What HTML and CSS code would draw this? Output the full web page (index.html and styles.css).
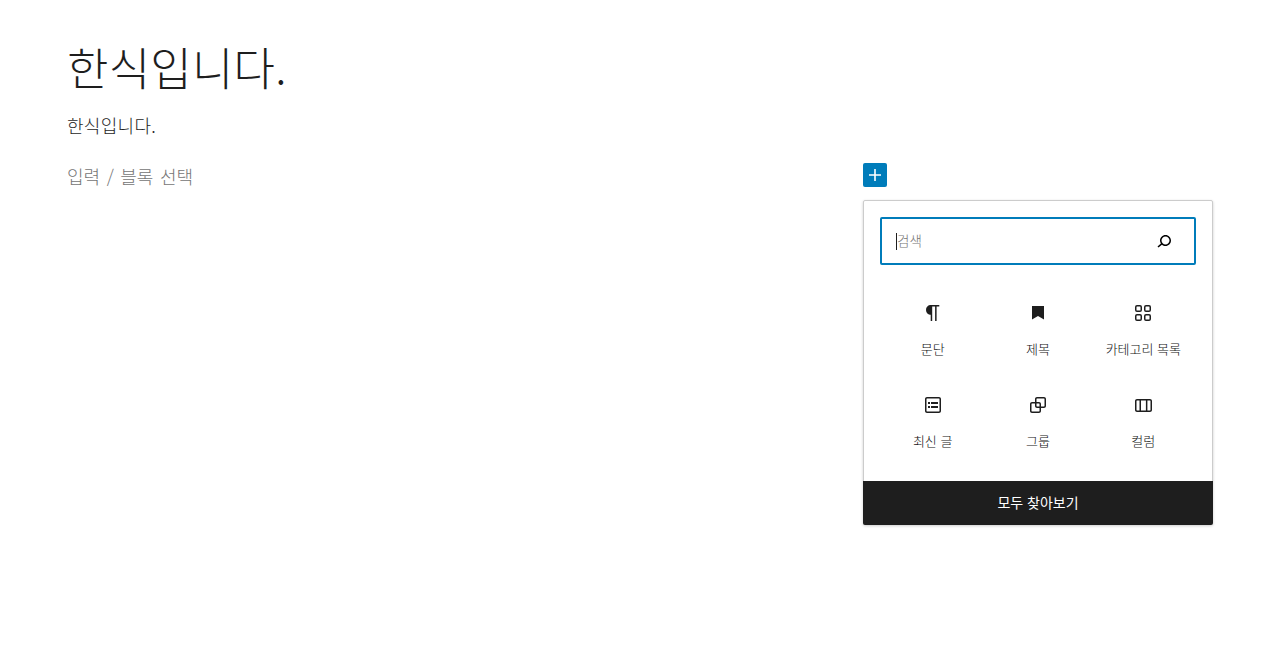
FILE: index.html
```html
<!DOCTYPE html>
<html lang="ko">
<head>
<meta charset="utf-8">
<title>한식입니다.</title>
<link rel="stylesheet" href="styles.css">
</head>
<body>
<main class="editor">
  <h1 class="title">한식입니다.</h1>
  <p class="para">한식입니다.</p>
  <p class="placeholder">입력 / 블록 선택</p>
</main>
<button class="add" aria-label="추가"><svg viewBox="0 0 24 24" width="24" height="24"><path d="M18 11.2h-5.2V6h-1.6v5.2H6v1.6h5.2V18h1.6v-5.2H18z"/></svg></button>
<section class="popover">
  <div class="search">
    <span class="caret"></span><span class="search-text">검색</span>
    <svg class="search-icon" viewBox="0 0 24 24" width="24" height="24"><path d="M13.5 6C10.5 6 8 8.5 8 11.5c0 1.1.3 2.1.9 3l-3.4 3 1 1.1 3.4-2.9c1 .9 2.2 1.4 3.6 1.4 3 0 5.5-2.5 5.5-5.5C19 8.5 16.5 6 13.5 6zm0 9.5c-2.2 0-4-1.8-4-4s1.8-4 4-4 4 1.8 4 4-1.8 4-4 4z"/></svg>
  </div>
  <div class="grid">
    <div class="item"><svg viewBox="0 0 24 24" width="24" height="24"><path d="M18.3 4H9.9v-.1l-.9.2c-2.3.4-4 2.4-4 4.8s1.700 4.400 4 4.800l.7.100V20h1.500V5.500h2.900V20h1.500V5.500h2.700V4z"/></svg><span>문단</span></div>
    <div class="item"><svg viewBox="0 0 24 24" width="24" height="24"><path d="M6 5h12v13.500l-6-3.500-6 3.500z"/></svg><span>제목</span></div>
    <div class="item"><svg viewBox="0 0 24 24" width="24" height="24"><path fill-rule="evenodd" d="M6 5.500h3a.5.5 0 01.5.5v3a.5.5 0 01-.5.5H6a.5.5 0 01-.5-.5V6a.5.5 0 01.5-.5zM4 6a2 2 0 012-2h3a2 2 0 012 2v3a2 2 0 01-2 2H6a2 2 0 01-2-2V6zm11-.5h3a.5.5 0 01.5.5v3a.5.5 0 01-.5.5h-3a.5.5 0 01-.5-.5V6a.5.5 0 01.5-.5zM13 6a2 2 0 012-2h3a2 2 0 012 2v3a2 2 0 01-2 2h-3a2 2 0 01-2-2V6zm5 8.500h-3a.5.5 0 00-.5.5v3a.5.5 0 00.5.5h3a.5.5 0 00.5-.5v-3a.5.5 0 00-.5-.5zM15 13a2 2 0 00-2 2v3a2 2 0 002 2h3a2 2 0 002-2v-3a2 2 0 00-2-2h-3zm-9 1.500h3a.5.5 0 01.5.5v3a.5.5 0 01-.5.5H6a.5.5 0 01-.5-.5v-3a.5.5 0 01.5-.5zM4 15a2 2 0 012-2h3a2 2 0 012 2v3a2 2 0 01-2 2H6a2 2 0 01-2-2v-3z"/></svg><span>카테고리 목록</span></div>
    <div class="item"><svg viewBox="0 0 24 24" width="24" height="24"><path d="M18 4H6c-1.100 0-2 .9-2 2v12c0 1.100.9 2 2 2h12c1.100 0 2-.9 2-2V6c0-1.100-.9-2-2-2zm.5 14c0 .3-.2.5-.5.5H6c-.3 0-.5-.2-.5-.5V6c0-.3.2-.5.5-.5h12c.3 0 .5.2.5.5v12zM7 11h2V9H7v2zm0 4h2v-2H7v2zm3-4h7V9h-7v2zm0 4h7v-2h-7v2z"/></svg><span>최신 글</span></div>
    <div class="item"><svg viewBox="0 0 24 24" width="24" height="24"><path d="M18 4h-7c-1.100 0-2 .9-2 2v3H6c-1.100 0-2 .9-2 2v7c0 1.100.9 2 2 2h7c1.100 0 2-.9 2-2v-3h3c1.100 0 2-.9 2-2V6c0-1.100-.9-2-2-2zm-4.500 14c0 .3-.2.5-.5.5H6c-.3 0-.5-.2-.5-.5v-7c0-.3.2-.5.5-.5h3V13c0 1.100.9 2 2 2h2.500v3zm0-4.500H11c-.3 0-.5-.2-.5-.5v-2.500H13c.3 0 .5.2.5.5v2.500zm5-.5c0 .3-.2.5-.5.5h-3V11c0-1.100-.9-2-2-2h-2.500V6c0-.3.2-.5.5-.5h7c.3 0 .5.2.5.5v7z"/></svg><span>그룹</span></div>
    <div class="item"><svg viewBox="0 0 24 24" width="24" height="24"><path d="M19 6H6c-1.100 0-2 .9-2 2v9c0 1.100.9 2 2 2h13c1.100 0 2-.9 2-2V8c0-1.100-.9-2-2-2zm-4.100 1.500v10H10v-10h4.900zM5.500 17V8c0-.3.2-.5.5-.5h2.500v10H6c-.3 0-.5-.2-.5-.5zm14 0c0 .3-.2.5-.5.500h-2.600v-10H19c.3 0 .5.2.5.5v9z"/></svg><span>컬럼</span></div>
  </div>
  <button class="browse">모두 찾아보기</button>
</section>
</body>
</html>
```
FILE: styles.css
```css
* { box-sizing: border-box; }
html, body { margin: 0; height: 100%; background: #fff; overflow: hidden; }
body { font-family: "Noto Sans CJK KR", "Noto Sans", sans-serif; color: #1e1e1e; position: relative; }
.editor { padding: 37px 0 0 67px; }
.title { margin: 0; font-size: 45px; font-weight: 300; line-height: 60px; color: #1e1e1e; letter-spacing: .25px; }
.para { margin: 16px 0 0; font-size: 18px; font-weight: 300; line-height: 24px; letter-spacing: .3px; }
.placeholder { margin: 27px 0 0; font-size: 18px; font-weight: 300; line-height: 24px; color: #757575; word-spacing: 1.5px; }
.add { position: absolute; left: 863px; top: 163px; width: 24px; height: 24px; padding: 0; border: 0; border-radius: 2px; background: #007cba; display: block; }
.add svg { fill: #fff; display: block; }
.popover { position: absolute; left: 863px; top: 200px; width: 350px; height: 325px; background: #fff; border: 1px solid #ccc; border-radius: 2px; box-shadow: 0 1px 3px rgba(0,0,0,.2); display: flex; flex-direction: column; }
.search { margin: 16px 16px 0; height: 48px; border: 2px solid #007cba; border-radius: 2px; display: flex; align-items: center; padding: 0 18px 0 14px; }
.caret { width: 1px; height: 17px; background: #1e1e1e; }
.search-text { font-size: 13.500px; font-weight: 300; color: #757575; flex: 1; position: relative; top: -1px; }
.search-icon { display: block; }
.grid { margin: 32px 16px 0; display: grid; grid-template-columns: repeat(3, 1fr); grid-auto-rows: 92px; flex: 1; }
.item { display: flex; flex-direction: column; align-items: center; padding-top: 4px; }
.item svg { fill: #1e1e1e; display: block; }
.item span { margin-top: 15px; font-size: 13px; line-height: 18px; font-weight: 300; color: #111; white-space: nowrap; }
.browse { height: 44px; margin: 0 -1px -1px; border: 0; border-radius: 0 0 2px 2px; background: #1e1e1e; color: #fff; font: 400 14px/18px "Noto Sans CJK KR", sans-serif; padding: 0 0 2px; flex: none; }
```
